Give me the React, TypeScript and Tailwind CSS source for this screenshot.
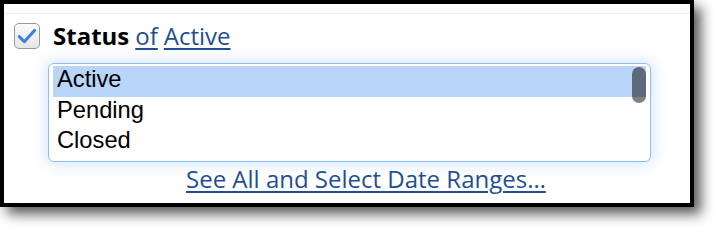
import React from 'react'

const options = ['Active', 'Pending', 'Closed']

function CheckBox() {
  return (
    <div className="w-[26px] h-[26px] rounded-[5px] border-[1.5px] border-[#9a9a9a] bg-gradient-to-b from-[#fafafa] to-[#e6e6e6] flex items-center justify-center">
      <svg width="22" height="22" viewBox="0 0 20 20" fill="none">
        <path
          d="M3 10.5 L7.6 15.2 L17 4.8"
          stroke="#3f80e2"
          strokeWidth="2.8"
          strokeLinecap="round"
          strokeLinejoin="round"
        />
      </svg>
    </div>
  )
}

export default function App() {
  return (
    <div className="w-[714px] h-[228px] bg-white">
      {/* Filter panel */}
      <div className="w-[694px] h-[207px] border-4 border-black bg-white shadow-[7px_7px_12px_rgba(0,0,0,0.65)]">
        <div className="h-[9px]" />
        <div className="border-t border-[#ececec]">
          {/* Header row */}
          <div className="mt-[9px] ml-[10px] h-[26px] flex items-center gap-[13px] text-[24px] leading-[24px] font-['Open_Sans',sans-serif]">
            <CheckBox />
            <div className="flex items-center gap-[6px]">
              <span className="font-bold text-black">Status</span>
              <a href="#" className="text-[#1f4f91] underline decoration-[1.5px] underline-offset-[3px]">of</a>
              <a href="#" className="text-[#1f4f91] underline decoration-[1.5px] underline-offset-[3px]">Active</a>
            </div>
          </div>

          {/* Options list */}
          <div className="relative mt-[14px] ml-[44px] w-[603px] h-[99px] rounded-[6px] border border-[#8cbdf5] bg-white px-[4px] pt-[2px] shadow-[0_0_14px_3px_rgba(120,170,250,0.28)] font-['Liberation_Sans',Arial,sans-serif] text-[23.7px] text-black">
            {options.map((opt, i) => (
              <div
                key={opt}
                className={`h-[30.5px] leading-[26px] pl-[4px] ${i === 0 ? 'bg-[#b9d5f9]' : ''}`}
              >
                {opt}
              </div>
            ))}
            <div className="absolute top-[3px] right-[4px] w-[14px] h-[36px] rounded-full bg-[rgba(0,0,0,0.5)]" />
          </div>

          {/* See all link */}
          <div className="mt-[5px] pl-[182px] font-['Open_Sans',sans-serif] text-[24px] leading-[24px]">
            <a href="#" className="text-[#1f4f91] underline decoration-[1.5px] underline-offset-[3px]">
              See All and Select Date Ranges…
            </a>
          </div>
        </div>
      </div>
    </div>
  )
}
